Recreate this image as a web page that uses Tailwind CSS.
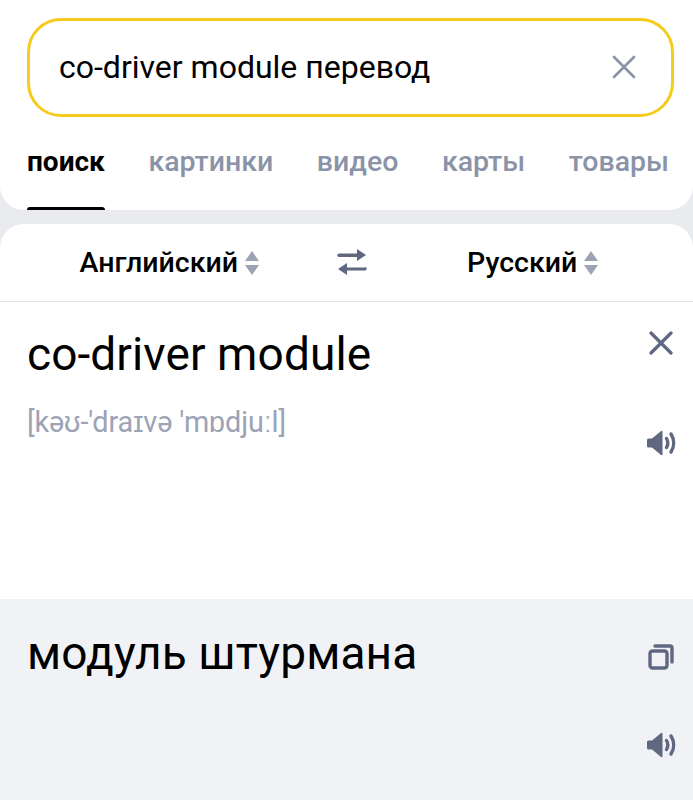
<!DOCTYPE html>
<html lang="ru">
<head>
    <meta charset="UTF-8">
    <meta name="viewport" content="width=device-width, initial-scale=1.0">
    <title>co-driver module перевод</title>
    <script src="https://cdn.jsdelivr.net/npm/@tailwindcss/browser@4"></script>
</head>
<body class="bg-[#e9ebef] font-[Roboto,sans-serif] text-black h-[800px] w-[693px] overflow-hidden">
    <!-- Search header -->
    <header class="bg-white rounded-b-[24px] h-[210px] pt-[18px] overflow-hidden">
        <div class="mx-[27px] mr-[19px] h-[99px] border-[3px] border-[#f5cc1c] rounded-[34px] flex items-center justify-between pl-[29px] pr-[35px]">
            <span class="text-[32px] leading-[40px] -mt-[2px]">co-driver module перевод</span>
            <svg class="w-[24px] h-[24px] -mt-[1px]" viewBox="0 0 24 24" fill="none" stroke="#8b93a6" stroke-width="2.6" stroke-linecap="round"><path d="M2 2l20 20M22 2L2 22"/></svg>
        </div>
        <nav class="flex justify-between pl-[27px] pr-[24px] mt-[25px] text-[28.5px] leading-[40px] font-medium text-[#8b93a8]">
            <div class="relative h-[68px]">
                <span class="text-black font-bold text-[28px]">поиск</span>
                <div class="absolute left-0 right-0 bottom-0 h-[3px] bg-black rounded-t-sm"></div>
            </div>
            <span>картинки</span>
            <span>видео</span>
            <span>карты</span>
            <span>товары</span>
        </nav>
    </header>

    <!-- Translator -->
    <main class="bg-white rounded-t-[24px] mt-[14px] h-[576px] overflow-hidden flex flex-col">
        <div class="h-[78px] border-b border-[#e3e4e8] flex items-center text-[28.5px] font-medium">
            <div class="w-[337px] flex items-center justify-end gap-[6px] pr-[77px]">
                <span class="mt-[2px]">Английский</span>
                <svg class="w-[16px] h-[26px]" viewBox="0 0 16 26" fill="#9ca3b4"><path d="M8 1l7 10H1zM8 25L1 15h14z"/></svg>
            </div>
            <svg class="w-[30px] h-[26px] -mt-[1px]" viewBox="0 0 30 26" fill="#5f6880"><path d="M2 4.500H20V0l9 6-9 6V8H2a1.700 1.700 0 0 1 0-3.500zM28 18.500H10V14l-9 6 9 6v-4.500H28a1.700 1.700 0 0 0 0-3.500z"/></svg>
            <div class="flex-1 flex items-center gap-[6px] pl-[100px]">
                <span class="mt-[2px]">Русский</span>
                <svg class="w-[16px] h-[26px]" viewBox="0 0 16 26" fill="#9ca3b4"><path d="M8 1l7 10H1zM8 25L1 15h14z"/></svg>
            </div>
        </div>

        <section class="h-[297px] flex justify-between pl-[27px] pr-[16px]">
            <div class="pt-[24px]">
                <div class="text-[46px] leading-[56px] tracking-[0.1px]">co-driver module</div>
                <div class="text-[28.8px] leading-[36px] text-[#9ca3b4] mt-[22px] font-normal tracking-[-0.1px]">[kəʊ-'draɪvə 'mɒdjuːl]</div>
            </div>
            <div class="flex flex-col items-center w-[32px] pt-[29px]">
                <svg class="w-[24px] h-[24px]" viewBox="0 0 24 24" fill="none" stroke="#5f6880" stroke-width="3.200" stroke-linecap="round"><path d="M2 2l20 20M22 2L2 22"/></svg>
                <svg class="w-[30px] h-[26px] mt-[75px]" viewBox="0 0 30 26" fill="#5f6880"><path d="M1 10a1.500 1.500 0 0 1 1.500-1.500H6L14.500 1.500a1 1 0 0 1 2 .8v21.400a1 1 0 0 1-2 .8L6 17.500H2.500A1.500 1.500 0 0 1 1 16z"/><path d="M20.500 8.500c1.800 3 1.800 6 0 9M25 4c3.500 5.500 3.500 12.500 0 18" fill="none" stroke="#5f6880" stroke-width="3.400" stroke-linecap="round"/></svg>
            </div>
        </section>

        <section class="flex-1 bg-[#f1f2f6] flex justify-between pl-[27px] pr-[16px]">
            <div class="text-[46px] leading-[56px] tracking-[0.15px] pt-[26px]">модуль штурмана</div>
            <div class="flex flex-col items-center w-[32px] pt-[45px]">
                <svg class="w-[26px] h-[26px]" viewBox="0 0 26 26" fill="none" stroke="#5f6880" stroke-width="3.400" stroke-linecap="round" stroke-linejoin="round"><rect x="2" y="7" width="17" height="17" rx="2.500"/><path d="M7 2h15a2 2 0 0 1 2 2v14"/></svg>
                <svg class="w-[30px] h-[26px] mt-[62px]" viewBox="0 0 30 26" fill="#5f6880"><path d="M1 10a1.500 1.500 0 0 1 1.500-1.500H6L14.500 1.500a1 1 0 0 1 2 .8v21.400a1 1 0 0 1-2 .8L6 17.500H2.500A1.500 1.500 0 0 1 1 16z"/><path d="M20.500 8.500c1.800 3 1.800 6 0 9M25 4c3.500 5.500 3.500 12.500 0 18" fill="none" stroke="#5f6880" stroke-width="3.400" stroke-linecap="round"/></svg>
            </div>
        </section>
    </main>
</body>
</html>
